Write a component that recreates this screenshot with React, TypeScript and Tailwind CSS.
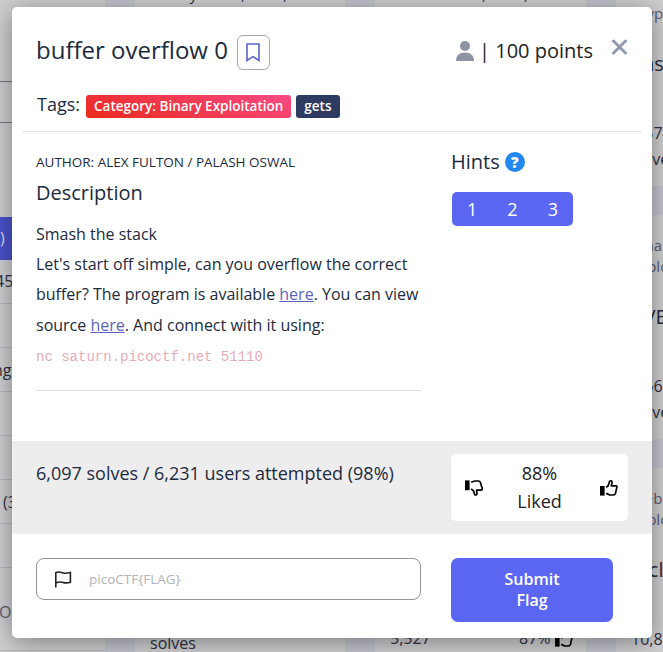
import React from "react";

const open = "font-['Open_Sans','Noto_Sans',sans-serif]";

function ThumbUp({ className = "" }: { className?: string }) {
  return (
    <svg viewBox="0 0 20 18" className={className} width="20" height="18" fill="none">
      <rect x="1" y="7" width="4.6" height="9.6" fill="#000" />
      <path
        d="M7.2 8.3 L9.2 6.8 L10.6 2.2 Q12.6 1 13.1 3.2 L12.3 6.8 H17 Q18.6 7.4 17.7 8.9 L16.4 14.6 Q15.7 16 14 16 H10.8 L7.2 14.4"
        stroke="#000"
        strokeWidth="1.7"
        strokeLinejoin="round"
      />
    </svg>
  );
}

function ThumbDown() {
  return (
    <svg viewBox="0 0 20 18" width="20" height="18" fill="none">
      <rect x="1" y="1.4" width="4.6" height="9.8" fill="#000" />
      <path
        d="M7.2 3.3 L10.8 2 H14.6 Q16 2 16.4 3.4 L18.2 9.3 Q18.5 11 16.8 11.2 H12.5 L13 14.6 Q12.8 16.7 10.8 15.7 L9.6 12.2 L7.2 9.8"
        stroke="#000"
        strokeWidth="1.7"
        strokeLinejoin="round"
      />
    </svg>
  );
}

function Card({ a, b, title, n, last }: { a: string; b?: string; title: string; n: string; last?: string }) {
  return (
    <div className="h-[224px] shrink-0 bg-[#d0cfd1] pl-[15px] pt-[20px] whitespace-nowrap overflow-hidden">
      <div className="h-[42px] text-[15px] leading-[21px] text-[#5b5d70]">
        <div className="h-[21px]">{a}</div>
        <div>{b}</div>
      </div>
      <div className="mt-[28px] text-[20px] leading-6 text-[#252b42]">{title}</div>
      <div className="mt-[44px] text-[16px] leading-[26px] text-[#2f323f]">
        <div>{n}</div>
        <div>{last}</div>
      </div>
    </div>
  );
}

function Backdrop() {
  const line = "border-b border-[#b8b8bf]";
  return (
    <div className="flex h-full">
      <div className="w-[105px] shrink-0 bg-[#d0cfd1] text-[16px] text-[#2f3240] whitespace-nowrap">
        <div className="h-[82px] border-b border-[#74767f]" />
        <div className="h-[41px] border-b border-[#74767f]" />
        <div className="h-[94px]" />
        <div className="h-[43px] bg-[#4a54cb] leading-[43px] text-[#dcdcf0]">)</div>
        <div className={`h-11 leading-[42px] -indent-[5px] ${line}`}>45)</div>
        <div className={`h-11 ${line}`} />
        <div className={`h-11 leading-[44px] ${line}`}>
          <span className="-ml-[7px]">ng</span>
        </div>
        <div className={`h-11 ${line}`} />
        <div className={`h-11 ${line}`} />
        <div className={`h-11 leading-[44px] pl-[3px] ${line}`}>(31)</div>
        <div className={`h-11 ${line}`} />
        <div className="h-[83px] leading-[88px] text-[#5b5d70] -indent-[1px] border-b border-[#b8b8bf]">OR</div>
      </div>
      <div className="w-[30px] shrink-0" />
      <div className="flex w-[210px] shrink-0 flex-col justify-between bg-[#d0cfd1] pl-[15px] text-[16px] leading-[18px] text-[#2f323f]">
        <div className="-mt-[15px] flex whitespace-pre">
          <span className="w-[91px]">Binary</span>
          <span className="w-[42px]">,</span>
          <span>,</span>
        </div>
        <div>solves</div>
      </div>
      <div className="w-[30px] shrink-0" />
      <div className="flex w-[211px] shrink-0 flex-col justify-between bg-[#d0cfd1] pl-[15px] text-[16px] leading-[28px] text-[#2f323f]">
        <div className="-mt-[20px] flex pl-[92px]">
          <span className="w-[42px]">,</span>
          <span>,</span>
        </div>
        <div className="flex">
          <span className="w-[129px]">5,527</span>
          <span>87%</span>
          <ThumbUp className="mt-[6px] ml-[3px]" />
        </div>
      </div>
      <div className="w-[30px] shrink-0" />
      <div className="flex w-[47px] shrink-0 flex-col gap-[29px] overflow-hidden">
        <div className="-mt-[38px] shrink-0">
          <Card a="" b="Cryptography" title="basic-mod1" n="6,574" last="solves" />
        </div>
        <Card a="Binary" b="Exploitation" title="CVE-XXXX-XXXX" n="8,667" last="solves" />
        <Card a="Web" b="Exploitation" title="Includes" n="10,867" />
      </div>
    </div>
  );
}

export default function App() {
  return (
    <div className={`relative h-[652px] w-[663px] overflow-hidden bg-[#c5c5cf] ${open}`}>
      <Backdrop />
      <div className="absolute left-[12px] top-[7px] flex h-[631px] w-[640px] flex-col overflow-hidden rounded-[5px] bg-white text-[#212b3e] shadow-[0_4px_26px_rgba(0,0,0,0.4)]">
        <div className="mx-[10px] h-[125px] shrink-0 border-b border-[#e3e7eb] pl-[14px]">
          <div className="flex h-[91px] items-center">
            <h1 className="-mt-[6px] text-[24px] leading-8">buffer overflow 0</h1>
            <button className="ml-[9px] flex h-[35px] w-[33px] items-center justify-center rounded-[6px] border border-[#a3a7b2]">
              <svg width="14" height="19" viewBox="0 0 14 19" fill="none" stroke="#5a64c8" strokeWidth="1.6">
                <path d="M1 1 H13 V17.5 L7 13.6 L1 17.5 Z" />
              </svg>
            </button>
            <div className="-mt-[4px] ml-auto mr-[18px] flex items-center text-[20px] text-[#222]">
              <svg width="18" height="20" viewBox="0 0 18 20" fill="#8d93a3" className="mr-[5px]">
                <circle cx="9" cy="5" r="5" />
                <path d="M0 20 C0 14.5 3.5 11.6 9 11.6 S18 14.5 18 20 Z" />
              </svg>
              <span>| 100 points</span>
            </div>
            <svg className="mr-[14px] mb-[11px]" width="17" height="16" viewBox="0 0 17 16" stroke="#929ab0" strokeWidth="3" strokeLinecap="round">
              <path d="M2.5 2 L14.5 14 M14.5 2 L2.5 14" />
            </svg>
          </div>
          <div className="-mt-[5px] flex h-[26px] items-center">
            <span className="-mt-[3px] ml-px text-[18px]">Tags:</span>
            <span className="ml-[6px] h-[23px] rounded-[3px] bg-[linear-gradient(20deg,#ea2a1c,#f94a85)] bg-[#ef3340] px-2 text-[13.5px] leading-[22px] font-semibold text-white">
              Category: Binary Exploitation
            </span>
            <span className="ml-[5px] h-[23px] rounded-[3px] bg-[#2d3a61] px-2 text-[13.5px] leading-[22px] font-semibold text-white">gets</span>
          </div>
        </div>

        <div className="flex h-[309px] shrink-0 pl-6">
          <div className="w-[385px] shrink-0">
            <div className="mt-[20px] text-[13.5px] leading-5">AUTHOR: ALEX FULTON / PALASH OSWAL</div>
            <h2 className="mt-[6px] text-[20px] leading-[30px]">Description</h2>
            <p className="mt-[11px] text-[16px] leading-[30.2px] whitespace-nowrap">
              Smash the stack
              <br />
              Let's start off simple, can you overflow the correct
              <br />
              buffer? The program is available <a className="text-[#5a64c0] underline">here</a>. You can view
              <br />
              source <a className="text-[#5a64c0] underline">here</a>. And connect with it using:
              <br />
              <code className="font-['Liberation_Mono',monospace] text-[14px] text-[#e5adb7]">nc saturn.picoctf.net 51110</code>
            </p>
            <div className="mt-[17.5px] h-px bg-[#e0e0e2]" />
          </div>
          <div className="ml-[30px]">
            <div className="mt-[15px] flex items-center text-[20px] leading-[30px]">
              Hints
              <span className="ml-[5px] flex size-5 items-center justify-center rounded-full bg-[#2288ee] text-[15px] leading-5 font-extrabold text-white">?</span>
            </div>
            <div className="ml-px mt-[15px] flex h-[34px] w-[121px] rounded-[5px] bg-[#5b67f3] text-center text-[18px] leading-[34px] font-medium text-white">
              <span className="flex-1">1</span>
              <span className="flex-1">2</span>
              <span className="flex-1">3</span>
            </div>
          </div>
        </div>

        <div className="flex h-[93px] shrink-0 bg-[#ededed] pl-6">
          <div className="w-[415px] pt-[18px] text-[18px] leading-[28px]">6,097 solves / 6,231 users attempted (98%)</div>
          <div className="mt-[13px] flex h-[67px] w-[177px] items-center justify-between rounded-[5px] bg-white px-[13px] text-[#222]">
            <ThumbDown />
            <div className="-ml-[4px] -mt-[2px] text-center text-[18px] leading-[28px]">
              88%
              <br />
              Liked
            </div>
            <ThumbUp className="-mr-[4px]" />
          </div>
        </div>

        <div className="flex pl-6 pt-6">
          <div className="flex h-[42px] w-[385px] items-center rounded-[8px] border border-[#919599] pl-[17px]">
            <svg width="18" height="17" viewBox="0 0 18 17" fill="none" stroke="#222" strokeWidth="1.6">
              <path d="M1.8 16.5 V1.7 C5 0.2 6.5 1.3 9 2 S13.5 2.3 16.4 1.5 V11.2 C13.5 12.2 11.5 12.2 9 11.4 S4.5 10.7 1.8 12" />
            </svg>
            <span className="ml-[17px] text-[13.5px] text-[#b0b3b8]">picoCTF{"{FLAG}"}</span>
          </div>
          <button className="ml-[30px] h-[64px] w-[162px] rounded-[7px] bg-[#5b67f3] text-[16px] leading-[21px] font-semibold text-white">
            Submit
            <br />
            Flag
          </button>
        </div>
      </div>
    </div>
  );
}
